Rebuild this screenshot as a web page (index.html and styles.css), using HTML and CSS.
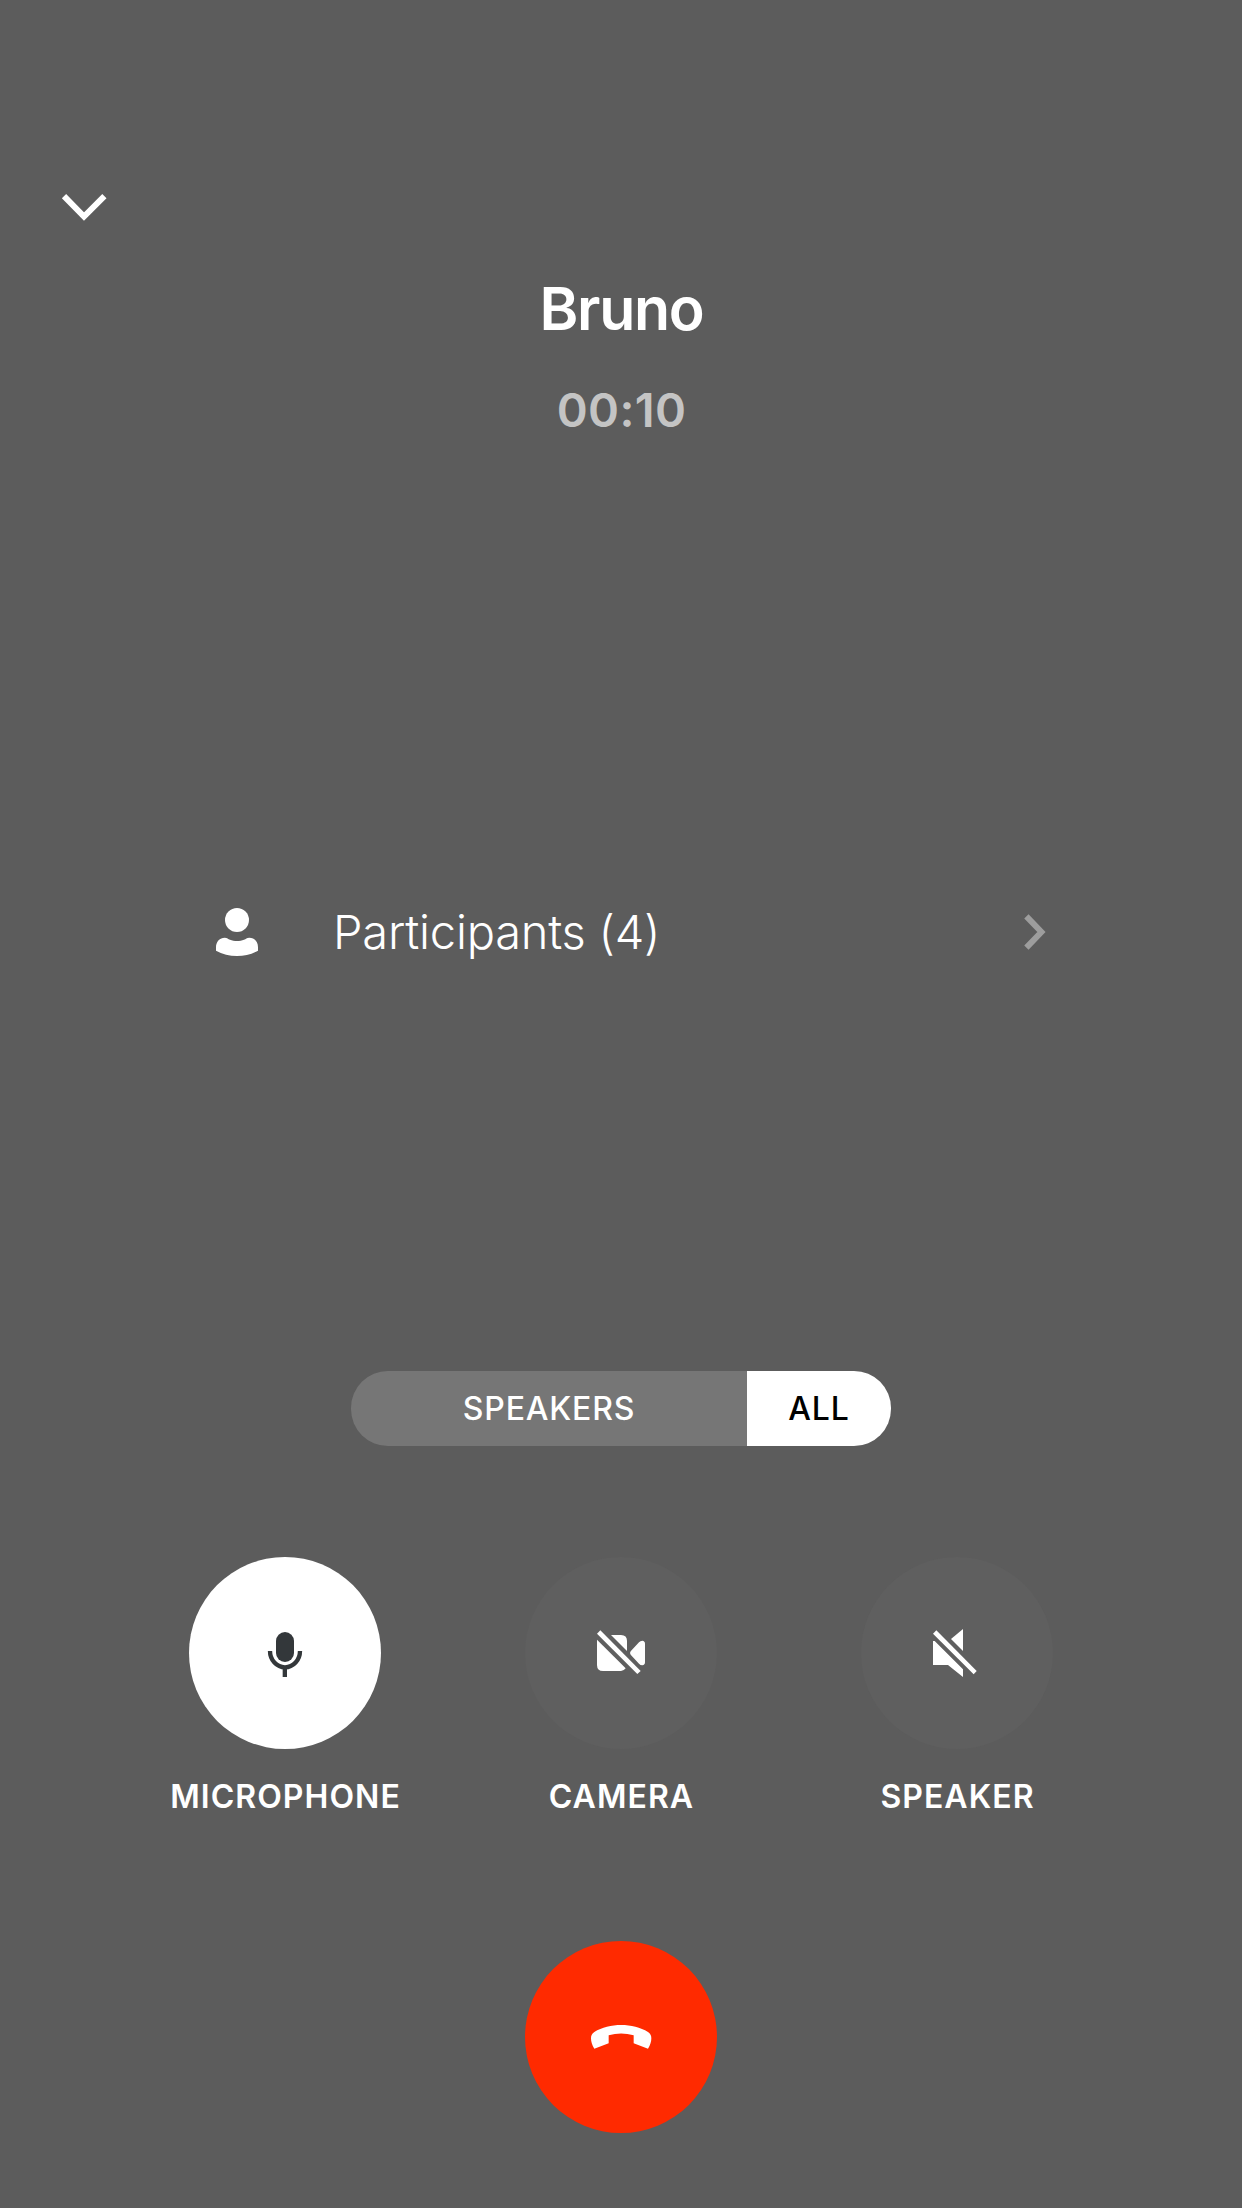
FILE: index.html
```html
<!DOCTYPE html>
<html lang="en">
<head>
<meta charset="utf-8">
<title>Call</title>
<link rel="stylesheet" href="styles.css">
</head>
<body>
<main class="call">
  <header class="top">
    <svg class="collapse" viewBox="0 0 48 32"><path d="M4 6.2 24 26.6 44.4 6.2"/></svg>
  </header>
  <h1 class="name">Bruno</h1>
  <p class="timer">00:10</p>
  <section class="participants">
    <svg class="person" viewBox="48 54 126 144"><circle cx="111" cy="90" r="36"/><path d="M48 182V172C48 154 60 143 74 143C82 143 84 147 90 149C102 154 120 154 132 149C138 147 140 143 148 143C162 143 174 154 174 172V182Q145 198 111 198Q77 198 48 182Z"/></svg>
    <span class="participants-label">Participants (4)</span>
    <svg class="more" viewBox="0 0 24 40"><path d="M3.4 4.4 18.4 20 3.4 35.6"/></svg>
  </section>
  <div class="layout-switch">
    <button class="segment">SPEAKERS</button>
    <button class="segment active">ALL</button>
  </div>
  <div class="controls">
    <div class="control">
      <button class="round on"><svg viewBox="87 51 576 576"><rect x="348" y="276" width="54" height="90" rx="27"/><path class="line" d="M330 333A45 49 0 0 0 420 333"/><path d="M368 384H381V411H368Z"/></svg></button>
      <span class="label">MICROPHONE</span>
    </div>
    <div class="control">
      <button class="round"><svg viewBox="45 51 576 576"><path d="M303 285H333Q351 285 351 303V333Z"/><path d="M261 299 347 385Q341 393 333 393H279Q261 393 261 375Z"/><path d="M261 281 271 271 392 393 382 402Z"/><path d="M362 334 387 307Q391 302 397 302 405 303 405 311V367Q405 375 397 376 391 376 387 371L362 344Q358 339 362 334Z"/></svg></button>
      <span class="label">CAMERA</span>
    </div>
    <div class="control">
      <button class="round"><svg viewBox="33 51 576 576"><path d="M339 267V333L303 297Z"/><path d="M249 281 259 271 380 393 371 403Z"/><path d="M249 303H254L339 388V411L294 375H249Z"/></svg></button>
      <span class="label">SPEAKER</span>
    </div>
  </div>
  <button class="round hangup"><svg viewBox="45 33 576 576"><path d="M253 356C246 345 243 335 243 325C243 316 246 311 253 306C298 278 369 278 414 306C421 311 424 316 424 325C424 335 421 345 414 356L371 340V316Q333 305 296 316V340Z"/></svg></button>
</main>
</body>
</html>
```
FILE: styles.css
```css
* { box-sizing: border-box; margin: 0; padding: 0; }
body { background: #5c5c5c; color: #fff; font-family: Inter, "Liberation Sans", sans-serif; }
button { border: 0; font: inherit; color: inherit; }
svg { display: block; fill: currentColor; }
.call { width: 1242px; height: 2208px; display: flex; flex-direction: column; align-items: center; }
.top { width: 100%; height: 268px; padding: 190px 60px 0; }
.collapse { width: 48px; height: 32px; fill: none; stroke: #fff; stroke-width: 6; }
.name { height: 82px; line-height: 82px; padding-left: 1px; font-size: 59px; font-weight: 600; letter-spacing: -1.3px; }
.timer { height: 60px; line-height: 60px; margin-top: 30px; padding-left: 1px; font-size: 47px; font-weight: 560; letter-spacing: 0.3px; color: #c4c4c4; }
.participants { width: 100%; height: 96px; margin-top: 444px; padding: 0 195px 0 216px; display: flex; align-items: center; }
.person { width: 42px; height: 48px; }
.participants-label { flex: 1; padding-left: 75px; font-size: 47px; font-weight: 300; line-height: 60px; letter-spacing: -0.22px; }
.more { width: 24px; height: 40px; fill: none; stroke: #9d9d9d; stroke-width: 6; }
.layout-switch { display: flex; width: 540px; height: 75px; margin-top: 391px; border-radius: 37px; overflow: hidden; }
.segment { flex: 1; background: #767676; font-size: 32px; font-weight: 500; letter-spacing: 0.8px; }
.segment.active { flex: 0 0 144px; background: #fff; color: #000; }
.controls { display: flex; gap: 144px; margin-top: 111px; }
.control { width: 192px; display: flex; flex-direction: column; align-items: center; }
.round { width: 192px; height: 192px; border-radius: 50%; background: #5f5f5f; }
.round svg { width: 192px; height: 192px; }
.round.on { background: #fff; color: #33373a; }
.line { fill: none; stroke: currentColor; stroke-width: 13; }
.label { height: 48px; margin-top: 24px; line-height: 48px; padding-left: 1px; font-size: 32px; font-weight: 560; letter-spacing: 1.05px; white-space: nowrap; }
.hangup { margin-top: 120px; background: #ff2a00; }
```
